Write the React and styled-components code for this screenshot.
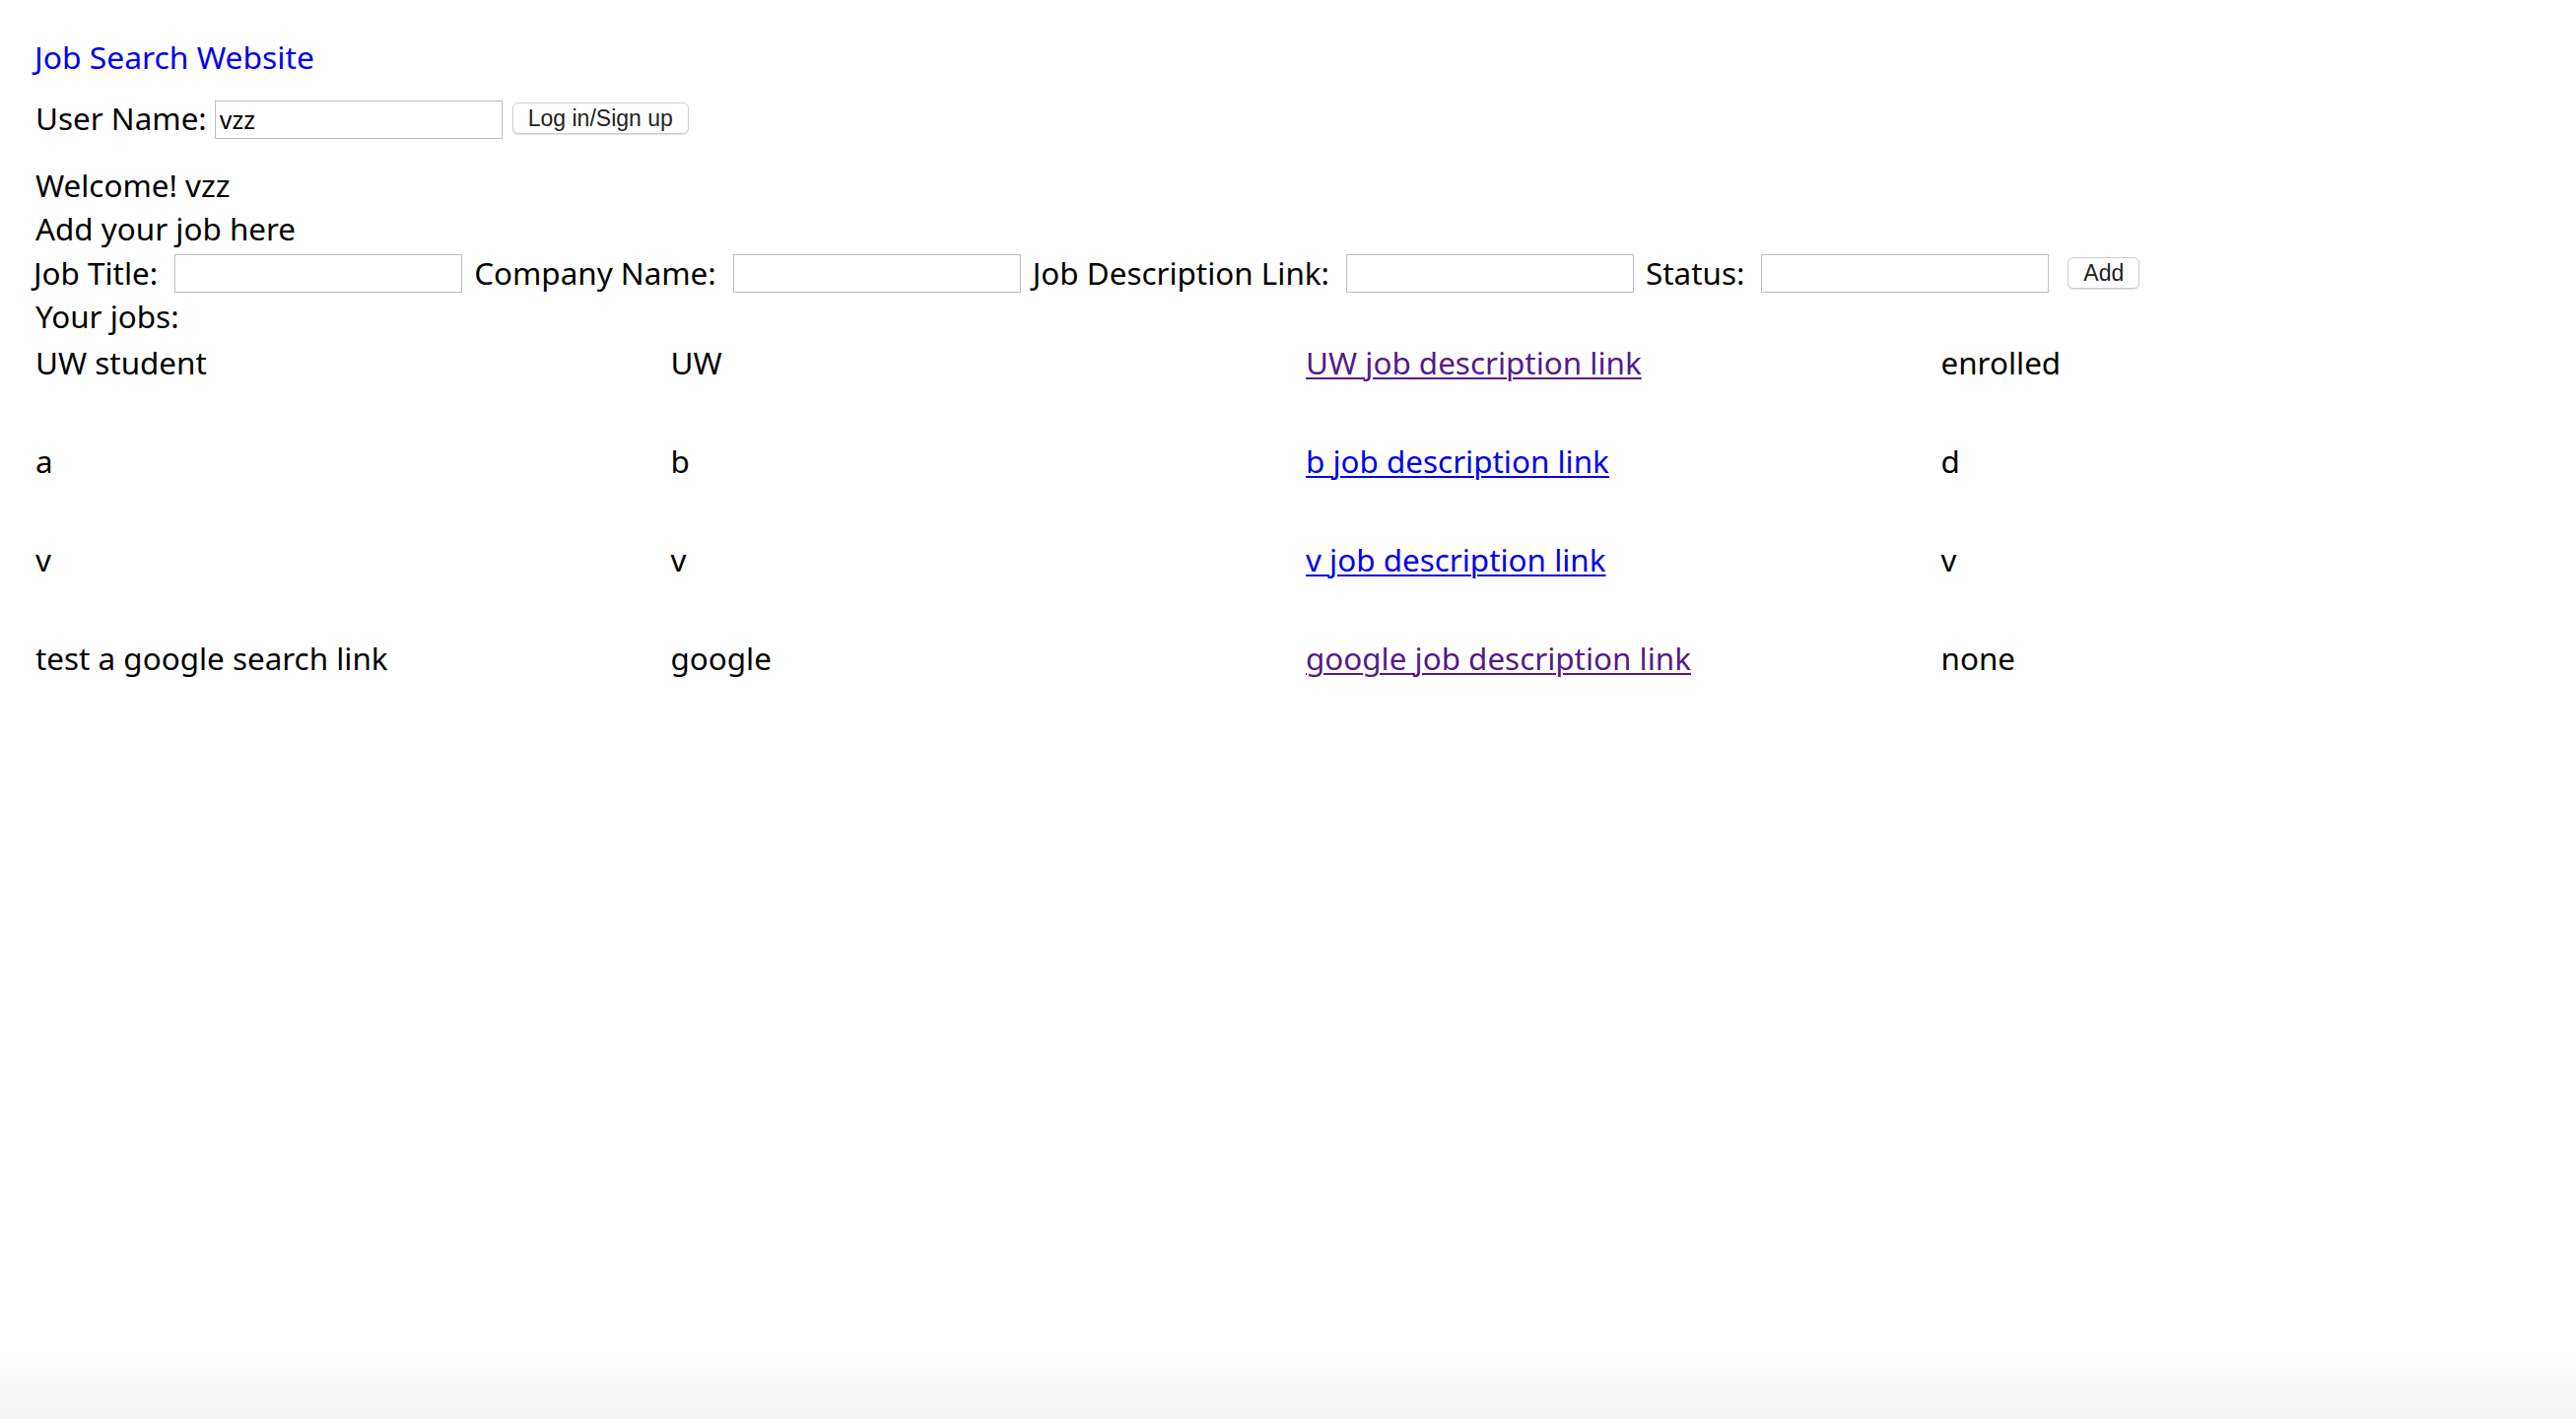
import React from "react";
import styled, { createGlobalStyle } from "styled-components";

const GlobalStyle = createGlobalStyle`
  html, body {
    margin: 0;
    padding: 0;
    background: #fff;
  }
  body {
    font-family: "Noto Sans", "Open Sans", sans-serif;
    color: #000;
  }
`;

const jobs = [
  { title: "UW student", company: "UW", link: "UW job description link", status: "enrolled", visited: true },
  { title: "a", company: "b", link: "b job description link", status: "d", visited: false },
  { title: "v", company: "v", link: "v job description link", status: "v", visited: false },
  { title: "test a google search link", company: "google", link: "google job description link", status: "none", visited: true },
];

const fields = ["Job Title:", "Company Name:", "Job Description Link:", "Status:"];

function App() {
  return (
    <>
      <GlobalStyle />
      <Page>
        <Title>Job Search Website</Title>

        <LoginRow>
          <Label>User Name:</Label>
          <TextInput defaultValue="vzz" />
          <Button>Log in/Sign up</Button>
        </LoginRow>

        <Welcome>Welcome! vzz</Welcome>
        <Line>Add your job here</Line>

        <FormRow>
          {fields.map((f) => (
            <Field key={f}>
              <Label>{f}</Label>
              <TextInput />
            </Field>
          ))}
          <Button>Add</Button>
        </FormRow>

        <Line>Your jobs:</Line>

        <JobList>
          {jobs.map((job) => (
            <JobRow key={job.title}>
              <Cell>{job.title}</Cell>
              <Cell>{job.company}</Cell>
              <Cell>
                <JobLink href="#" $visited={job.visited}>
                  {job.link}
                </JobLink>
              </Cell>
              <Cell>{job.status}</Cell>
            </JobRow>
          ))}
        </JobList>
      </Page>
    </>
  );
}

const Page = styled.div`
  min-height: 100vh;
  box-sizing: border-box;
  padding: 36px 0 0 36px;
  font-size: 31.4px;
  line-height: 44px;
  background: linear-gradient(
    to bottom,
    #fff 0,
    #fff calc(100% - 70px),
    #f3f3f3 100%
  );
`;

const Title = styled.div`
  color: #0000ee;
  font-size: 31.8px;
  height: 44px;
  margin-left: -1px;
`;

const Line = styled.div`
  height: 44px;
`;

const Welcome = styled(Line)`
  margin-top: 24px;
`;

const Label = styled.span`
  white-space: nowrap;
`;

const LoginRow = styled.div`
  display: flex;
  align-items: center;
  gap: 8px;
  height: 44px;
  margin-top: 18px;

  button {
    margin-left: 2px;
  }
`;

const FormRow = styled.div`
  display: flex;
  align-items: center;
  gap: 12px;
  height: 45px;
  margin-left: -2px;

  button {
    margin-left: 7px;
  }
`;

const Field = styled.div`
  display: flex;
  align-items: center;
  gap: 17px;
`;

const TextInput = styled.input`
  box-sizing: border-box;
  width: 292px;
  height: 39px;
  margin: 2px 0 0;
  padding: 0 4px;
  border: 1px solid #bdbdbd;
  border-radius: 0;
  background: #fff;
  font-family: "Noto Sans", sans-serif;
  font-size: 25px;
  color: #000;
  outline: none;
`;

const Button = styled.button`
  box-sizing: border-box;
  height: 32px;
  padding: 0 15px;
  border: 1px solid #cfcfcf;
  border-radius: 6px;
  background: #fff;
  box-shadow: 0 1px 1px rgba(0, 0, 0, 0.12);
  font-family: "Liberation Sans", Arial, sans-serif;
  font-size: 23px;
  line-height: 30px;
  color: #222;
  cursor: pointer;
`;

const JobList = styled.div`
  margin-top: 3px;
`;

const JobRow = styled.div`
  display: grid;
  grid-template-columns: repeat(4, 1fr);
  height: 100px;
`;

const Cell = styled.div`
  white-space: nowrap;
  line-height: 44px;
`;

const JobLink = styled.a`
  color: ${(p) => (p.$visited ? "#551a8b" : "#0000ee")};
  text-decoration: underline;
  text-decoration-thickness: 2px;
  text-underline-offset: 3px;
`;

export default App;
